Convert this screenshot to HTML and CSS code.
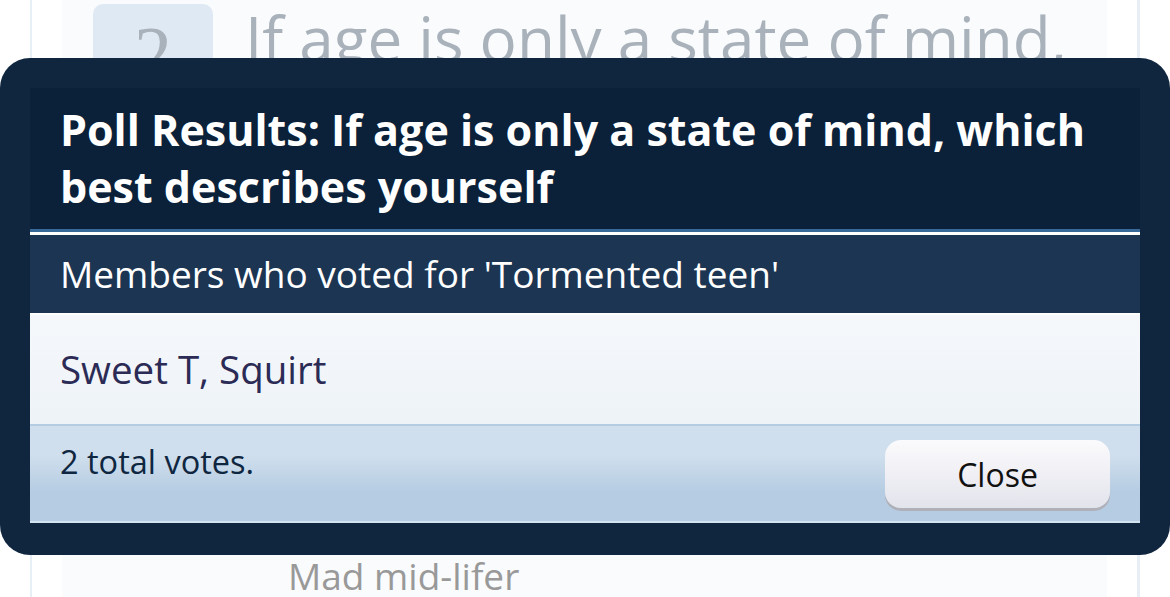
FILE: index.html
```html
<!DOCTYPE html>
<html>
<head>
  <title>Poll Results</title>
  <link rel="stylesheet" href="styles.css">
</head>
<body>
  <div class="frame">
    <div class="panel">
      <div class="question">
        <div class="qnum">2</div>
        <div class="qtext">If age is only a state of mind, which best describes yourself</div>
      </div>
      <div class="options">
        <div class="option">Tormented teen</div>
        <div class="option">Mad mid-lifer</div>
      </div>
    </div>
  </div>

  <div class="modal">
    <div class="modal-inner">
      <div class="modal-title">Poll Results: If age is only a state of mind, which best describes yourself</div>
      <div class="modal-sub">Members who voted for 'Tormented teen'</div>
      <div class="modal-body">Sweet T, Squirt</div>
      <div class="modal-foot">
        <span class="total">2 total votes.</span>
        <button class="close-btn">Close</button>
      </div>
    </div>
  </div>
</body>
</html>
```

FILE: styles.css
```css
body { margin: 0; background: #fff; font-family: "Open Sans", sans-serif; overflow: hidden; height: 597px; }
.frame { margin-left: 30px; width: 1105px; height: 597px; border-left: 2px solid #e7eef6; border-right: 3px solid #e7eef6; }
.panel { margin-left: 30px; width: 1045px; height: 597px; background: #f9fbfd; }
.question { display: flex; gap: 32px; padding: 4px 0 0 31px; height: 500px; }
.qnum { width: 120px; height: 120px; flex: none; background: #dfe9f3; border-radius: 10px; color: #a9b1ba; font-family: "Liberation Serif", serif; font-size: 76px; text-align: center; padding-top: 6px; box-sizing: border-box; }
.qtext { color: #a9b1ba; font-size: 62px; line-height: 70px; margin-top: -1px; }
.options { padding-left: 226px; }
.option { color: #999; font-size: 37px; line-height: 48px; }

.modal { position: absolute; left: 0; top: 58px; width: 1170px; height: 497px; box-sizing: border-box; padding: 30px; background: #10263f; border-radius: 30px; }
.modal-inner { display: flex; flex-direction: column; }
.modal-title { background: #0b2139; color: #fff; font-weight: bold; font-size: 43px; line-height: 57px; padding: 13px 30px 0; height: 144px; box-sizing: border-box; border-bottom: 3px solid #386897; }
.modal-sub { background: #1b3552; color: #fff; font-size: 37px; line-height: 78px; padding: 0 30px; border-top: 3px solid #fff; border-bottom: 2px solid #fff; }
.modal-body { background: linear-gradient(#f5f8fb, #eef3f8); color: #2b2b55; font-size: 38.5px; line-height: 109px; padding: 0 30px; border-bottom: 2px solid #b5cde3; }
.modal-foot { display: flex; justify-content: space-between; align-items: flex-start; height: 95px; padding: 0 30px; background: linear-gradient(#d0dfed 0%, #d0dfed 30%, #b5cce2 70%, #b5cce2 100%); border-bottom: 2px solid #d2e2ef; }
.total { color: #0f2640; font-size: 32.5px; padding-top: 13px; }
.close-btn { width: 225px; height: 68px; margin-top: 14px; border: none; border-radius: 16px; background: linear-gradient(#fbfbfd, #e3e3ec); box-shadow: 0 3px 0 #b0b0b8; font-family: "Open Sans", sans-serif; font-size: 32px; color: #111; }
```
